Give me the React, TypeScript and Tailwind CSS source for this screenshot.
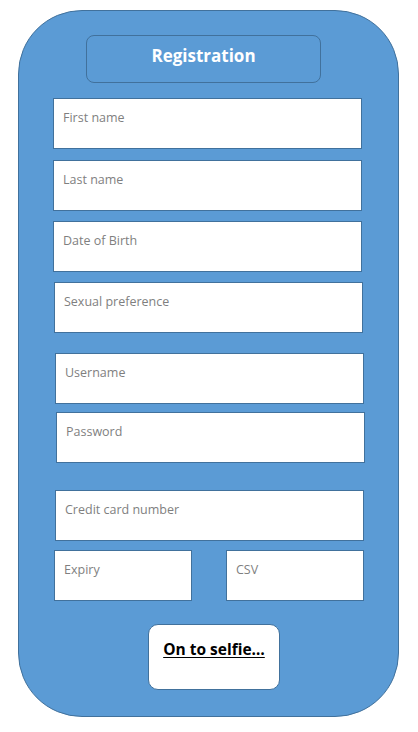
const Field = ({ label, className }: { label: string; className: string }) => (
  <div className={`h-[51px] bg-white border border-[#41719c] pl-[9px] pt-[10px] text-[12.5px] text-[#7f7f7f] ${className}`}>
    {label}
  </div>
);

export default function App() {
  return (
    <div className="w-[418px] h-[732px] bg-white overflow-hidden" style={{ fontFamily: '"Open Sans", "Liberation Sans", sans-serif' }}>
      <div className="ml-[18px] mt-[10px] w-[381px] h-[707px] rounded-[64px] bg-[#5b9bd5] border border-[#41719c] flex flex-col pt-[24px]">
        <div className="ml-[67px] w-[235px] h-[48px] rounded-[8px] border border-[#41719c] flex justify-center pt-[7px] text-[17px] font-bold text-white">
          Registration
        </div>
        <Field label="First name" className="mt-[15px] ml-[34px] w-[309px]" />
        <Field label="Last name" className="mt-[11px] ml-[34px] w-[309px]" />
        <Field label="Date of Birth" className="mt-[10px] ml-[34px] w-[309px]" />
        <Field label="Sexual preference" className="mt-[10px] ml-[35px] w-[309px]" />
        <Field label="Username" className="mt-[20px] ml-[36px] w-[309px]" />
        <Field label="Password" className="mt-[8px] ml-[37px] w-[309px]" />
        <Field label="Credit card number" className="mt-[27px] ml-[36px] w-[309px]" />
        <div className="mt-[9px] ml-[35px] flex gap-[34px]">
          <Field label="Expiry" className="w-[138px]" />
          <Field label="CSV" className="w-[138px]" />
        </div>
        <div className="mt-[23px] ml-[129px] w-[132px] h-[66px] rounded-[10px] bg-white border border-[#41719c] flex justify-center pt-[13px]">
          <span className="text-[15.5px] font-bold text-black underline underline-offset-2">On to selfie…</span>
        </div>
      </div>
    </div>
  );
}
